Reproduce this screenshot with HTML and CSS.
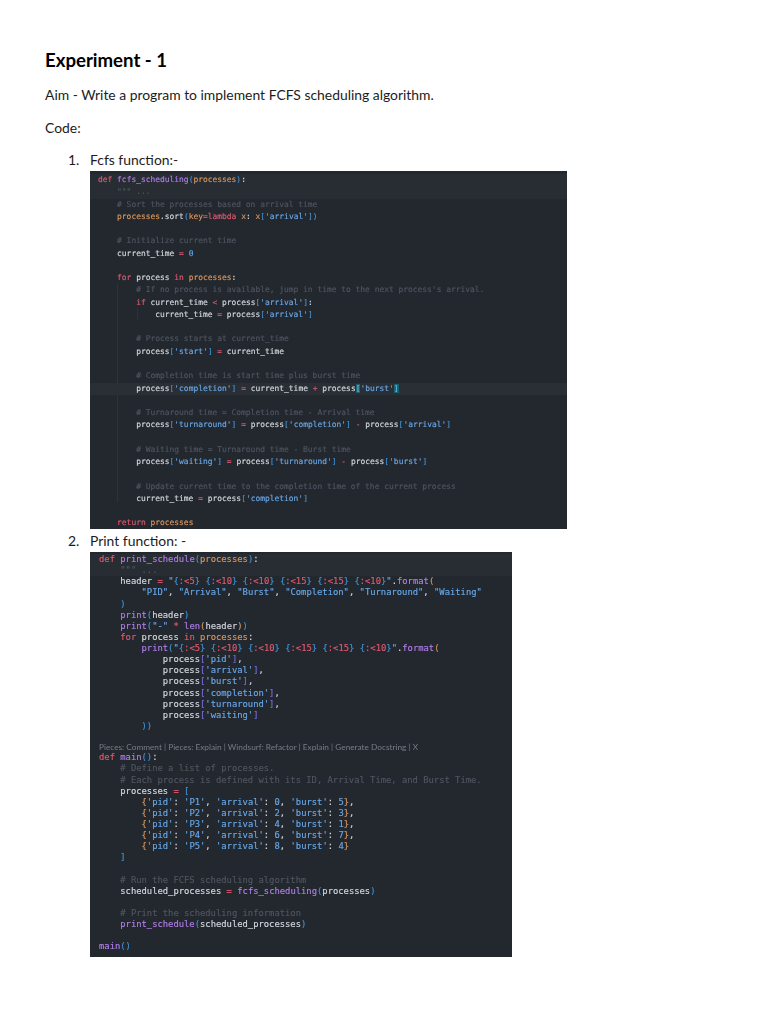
FILE: index.html
```html
<!DOCTYPE html>
<html lang="en">
<head>
<meta charset="utf-8">
<title>Experiment - 1</title>
<link rel="stylesheet" href="styles.css">
</head>
<body>
<main class="page">
<h1 class="title">Experiment - 1</h1>
<p class="para aim">Aim - Write a program to implement FCFS scheduling algorithm.</p>
<p class="para code-label">Code:</p>
<ol class="list">
<li class="item item-one">
<div class="item-head"><span class="num">1.</span><span>Fcfs function:-</span></div>
<div class="shot shot-one">
<i class="guide g1a"></i><i class="guide g1b"></i>
<div class="code"><span class="ln top"><span class="k">def</span> <span class="f">fcfs_scheduling</span><span class="b">(</span><span class="p">processes</span><span class="b">)</span><span class="n">:</span></span>
<span class="ln top">    <span class="c">""" ...</span></span>
<span class="ln">    <span class="c"># Sort the processes based on arrival time</span></span>
<span class="ln">    <span class="p">processes</span><span class="n">.sort</span><span class="b">(</span><span class="p">key</span><span class="k">=lambda</span> <span class="p">x</span><span class="n">:</span> <span class="p">x</span><span class="b">[</span><span class="s">'arrival'</span><span class="b">])</span></span>
<span class="ln"> </span>
<span class="ln">    <span class="c"># Initialize current time</span></span>
<span class="ln">    <span class="n">current_time</span> <span class="k">=</span> <span class="s">0</span></span>
<span class="ln"> </span>
<span class="ln">    <span class="k">for</span> <span class="n">process</span> <span class="k">in</span> <span class="p">processes</span><span class="n">:</span></span>
<span class="ln">        <span class="c"># If no process is available, jump in time to the next process's arrival.</span></span>
<span class="ln">        <span class="k">if</span> <span class="n">current_time</span> <span class="k">&lt;</span> <span class="n">process</span><span class="b">[</span><span class="s">'arrival'</span><span class="b">]</span><span class="n">:</span></span>
<span class="ln">            <span class="n">current_time</span> <span class="k">=</span> <span class="n">process</span><span class="b">[</span><span class="s">'arrival'</span><span class="b">]</span></span>
<span class="ln"> </span>
<span class="ln">        <span class="c"># Process starts at current_time</span></span>
<span class="ln">        <span class="n">process</span><span class="b">[</span><span class="s">'start'</span><span class="b">]</span> <span class="k">=</span> <span class="n">current_time</span></span>
<span class="ln"> </span>
<span class="ln">        <span class="c"># Completion time is start time plus burst time</span></span>
<span class="ln cur">        <span class="n">process</span><span class="b">[</span><span class="s">'completion'</span><span class="b">]</span> <span class="k">=</span> <span class="n">current_time</span> <span class="k">+</span> <span class="n">process</span><span class="m">[</span><span class="s">'burst'</span><span class="m">]</span></span>
<span class="ln"> </span>
<span class="ln">        <span class="c"># Turnaround time = Completion time - Arrival time</span></span>
<span class="ln">        <span class="n">process</span><span class="b">[</span><span class="s">'turnaround'</span><span class="b">]</span> <span class="k">=</span> <span class="n">process</span><span class="b">[</span><span class="s">'completion'</span><span class="b">]</span> <span class="k">-</span> <span class="n">process</span><span class="b">[</span><span class="s">'arrival'</span><span class="b">]</span></span>
<span class="ln"> </span>
<span class="ln">        <span class="c"># Waiting time = Turnaround time - Burst time</span></span>
<span class="ln">        <span class="n">process</span><span class="b">[</span><span class="s">'waiting'</span><span class="b">]</span> <span class="k">=</span> <span class="n">process</span><span class="b">[</span><span class="s">'turnaround'</span><span class="b">]</span> <span class="k">-</span> <span class="n">process</span><span class="b">[</span><span class="s">'burst'</span><span class="b">]</span></span>
<span class="ln"> </span>
<span class="ln">        <span class="c"># Update current time to the completion time of the current process</span></span>
<span class="ln">        <span class="n">current_time</span> <span class="k">=</span> <span class="n">process</span><span class="b">[</span><span class="s">'completion'</span><span class="b">]</span></span>
<span class="ln"> </span>
<span class="ln">    <span class="k">return</span> <span class="p">processes</span></span></div>
</div>
</li>
<li class="item item-two">
<div class="item-head"><span class="num">2.</span><span>Print function: -</span></div>
<div class="shot shot-two">
<div class="code"><span class="ln top"><span class="k">def</span> <span class="f">print_schedule</span><span class="b">(</span><span class="p">processes</span><span class="b">)</span><span class="n">:</span></span>
<span class="ln top">    <span class="c">""" ...</span></span>
<span class="ln">    <span class="n">header</span> <span class="k">=</span> <span class="s">"</span><span class="b">{</span><span class="k">:&lt;5</span><span class="b">}</span> <span class="b">{</span><span class="k">:&lt;10</span><span class="b">}</span> <span class="b">{</span><span class="k">:&lt;10</span><span class="b">}</span> <span class="b">{</span><span class="k">:&lt;15</span><span class="b">}</span> <span class="b">{</span><span class="k">:&lt;15</span><span class="b">}</span> <span class="b">{</span><span class="k">:&lt;10</span><span class="b">}</span><span class="s">"</span><span class="n">.</span><span class="f">format</span><span class="p">(</span></span>
<span class="ln">        <span class="s">"PID"</span><span class="n">,</span> <span class="s">"Arrival"</span><span class="n">,</span> <span class="s">"Burst"</span><span class="n">,</span> <span class="s">"Completion"</span><span class="n">,</span> <span class="s">"Turnaround"</span><span class="n">,</span> <span class="s">"Waiting"</span></span>
<span class="ln">    <span class="b">)</span></span>
<span class="ln">    <span class="f">print</span><span class="b">(</span><span class="n">header</span><span class="b">)</span></span>
<span class="ln">    <span class="f">print</span><span class="b">(</span><span class="s">"-"</span> <span class="k">*</span> <span class="f">len</span><span class="p">(</span><span class="n">header</span><span class="p">)</span><span class="b">)</span></span>
<span class="ln">    <span class="k">for</span> <span class="n">process</span> <span class="k">in</span> <span class="p">processes</span><span class="n">:</span></span>
<span class="ln">        <span class="f">print</span><span class="b">(</span><span class="s">"</span><span class="b">{</span><span class="k">:&lt;5</span><span class="b">}</span> <span class="b">{</span><span class="k">:&lt;10</span><span class="b">}</span> <span class="b">{</span><span class="k">:&lt;10</span><span class="b">}</span> <span class="b">{</span><span class="k">:&lt;15</span><span class="b">}</span> <span class="b">{</span><span class="k">:&lt;15</span><span class="b">}</span> <span class="b">{</span><span class="k">:&lt;10</span><span class="b">}</span><span class="s">"</span><span class="n">.</span><span class="f">format</span><span class="p">(</span></span>
<span class="ln">            <span class="n">process</span><span class="v">[</span><span class="s">'pid'</span><span class="v">]</span><span class="n">,</span></span>
<span class="ln">            <span class="n">process</span><span class="v">[</span><span class="s">'arrival'</span><span class="v">]</span><span class="n">,</span></span>
<span class="ln">            <span class="n">process</span><span class="v">[</span><span class="s">'burst'</span><span class="v">]</span><span class="n">,</span></span>
<span class="ln">            <span class="n">process</span><span class="v">[</span><span class="s">'completion'</span><span class="v">]</span><span class="n">,</span></span>
<span class="ln">            <span class="n">process</span><span class="v">[</span><span class="s">'turnaround'</span><span class="v">]</span><span class="n">,</span></span>
<span class="ln">            <span class="n">process</span><span class="v">[</span><span class="s">'waiting'</span><span class="v">]</span></span>
<span class="ln">        <span class="b">))</span></span>
<span class="ln"> </span>
<span class="ln lens">Pieces: Comment | Pieces: Explain | Windsurf: Refactor | Explain | Generate Docstring | X</span>
<span class="ln"><span class="k">def</span> <span class="f">main</span><span class="b">()</span><span class="n">:</span></span>
<span class="ln">    <span class="c"># Define a list of processes.</span></span>
<span class="ln">    <span class="c"># Each process is defined with its ID, Arrival Time, and Burst Time.</span></span>
<span class="ln">    <span class="n">processes</span> <span class="k">=</span> <span class="b">[</span></span>
<span class="ln">        <span class="p">{</span><span class="s">'pid'</span><span class="n">:</span> <span class="s">'P1'</span><span class="n">,</span> <span class="s">'arrival'</span><span class="n">:</span> <span class="s">0</span><span class="n">,</span> <span class="s">'burst'</span><span class="n">:</span> <span class="s">5</span><span class="p">}</span><span class="n">,</span></span>
<span class="ln">        <span class="p">{</span><span class="s">'pid'</span><span class="n">:</span> <span class="s">'P2'</span><span class="n">,</span> <span class="s">'arrival'</span><span class="n">:</span> <span class="s">2</span><span class="n">,</span> <span class="s">'burst'</span><span class="n">:</span> <span class="s">3</span><span class="p">}</span><span class="n">,</span></span>
<span class="ln">        <span class="p">{</span><span class="s">'pid'</span><span class="n">:</span> <span class="s">'P3'</span><span class="n">,</span> <span class="s">'arrival'</span><span class="n">:</span> <span class="s">4</span><span class="n">,</span> <span class="s">'burst'</span><span class="n">:</span> <span class="s">1</span><span class="p">}</span><span class="n">,</span></span>
<span class="ln">        <span class="p">{</span><span class="s">'pid'</span><span class="n">:</span> <span class="s">'P4'</span><span class="n">,</span> <span class="s">'arrival'</span><span class="n">:</span> <span class="s">6</span><span class="n">,</span> <span class="s">'burst'</span><span class="n">:</span> <span class="s">7</span><span class="p">}</span><span class="n">,</span></span>
<span class="ln">        <span class="p">{</span><span class="s">'pid'</span><span class="n">:</span> <span class="s">'P5'</span><span class="n">,</span> <span class="s">'arrival'</span><span class="n">:</span> <span class="s">8</span><span class="n">,</span> <span class="s">'burst'</span><span class="n">:</span> <span class="s">4</span><span class="p">}</span></span>
<span class="ln">    <span class="b">]</span></span>
<span class="ln"> </span>
<span class="ln">    <span class="c"># Run the FCFS scheduling algorithm</span></span>
<span class="ln">    <span class="n">scheduled_processes</span> <span class="k">=</span> <span class="f">fcfs_scheduling</span><span class="b">(</span><span class="n">processes</span><span class="b">)</span></span>
<span class="ln"> </span>
<span class="ln">    <span class="c"># Print the scheduling information</span></span>
<span class="ln">    <span class="f">print_schedule</span><span class="b">(</span><span class="n">scheduled_processes</span><span class="b">)</span></span>
<span class="ln"> </span>
<span class="ln"><span class="f">main</span><span class="b">()</span></span></div>
</div>
</li>
</ol>
</main>
</body>
</html>
```
FILE: styles.css
```css
html, body {
  margin: 0;
  padding: 0;
  background: #fff;
}
.page {
  height: 1024px;
  box-sizing: border-box;
  padding: 48px 0 0 45px;
  font-family: "Lato", "Liberation Sans", sans-serif;
  font-size: 13.9px;
  line-height: 20px;
  color: #1c1c1c;
  overflow: hidden;
}
.title {
  margin: 0;
  font-size: 18.6px;
  line-height: 24px;
  font-weight: 700;
  color: #000;
}
.para {
  margin: 0;
}
.aim {
  margin-top: 13px;
}
.code-label {
  margin-top: 13px;
}
.list {
  list-style: none;
  margin: 11px 0 0;
  padding: 0 0 0 23px;
}
.item-head {
  display: flex;
  height: 20px;
  align-items: center;
}
.num {
  width: 22px;
}
.item-one .item-head {
  height: 22px;
}
.shot {
  position: relative;
  background: #23272e;
  overflow: hidden;
  box-sizing: border-box;
  margin-left: 22px;
}
.shot-one {
  width: 477px;
  height: 358px;
  padding-top: 3px;
  padding-left: 8px;
}
.item-two {
  margin-top: 2px;
}
.shot-two {
  width: 422px;
  height: 405px;
  margin-top: 1px;
  padding-top: 2px;
  padding-left: 9px;
}
.code {
  margin: 0;
  font-family: "DejaVu Sans Mono", "Liberation Mono", monospace;
  color: #d4d8de;
  -webkit-text-stroke: 0.15px currentColor;
  filter: blur(0.35px);
}
.shot-one .code {
  font-size: 7.93px;
}
.shot-two .code {
  font-size: 8.84px;
}
.ln {
  display: block;
  margin-left: -9px;
  padding-left: 9px;
  white-space: pre;
}
.shot-one .ln {
  height: 12.27px;
  line-height: 12.27px;
}
.shot-two .ln {
  height: 11.14px;
  line-height: 11.14px;
}
.top {
  background: #282c33;
}
.cur {
  background: #2a2e35;
}
.shot-two .lens {
  height: 9.2px;
  line-height: 9.2px;
  font-family: "Lato", "Liberation Sans", sans-serif;
  font-size: 8.27px;
  color: #767d87;
  -webkit-text-stroke: 0;
}
.k { color: #e05a70; }
.f { color: #b07fe8; }
.p { color: #d9975e; }
.s { color: #68a8e8; }
.c { color: #4f5661; }
.n { color: #d4d8de; }
.b { color: #3f93d8; }
.v { color: #7a6be0; }
.m {
  color: #5fc3e8;
  background: #1d5f6e;
}
.guide {
  position: absolute;
  display: block;
  width: 1px;
  background: #2e333b;
}
.g1a {
  left: 27px;
  top: 113px;
  height: 218px;
}
.g1b {
  left: 47px;
  top: 137px;
  height: 12px;
}
```
